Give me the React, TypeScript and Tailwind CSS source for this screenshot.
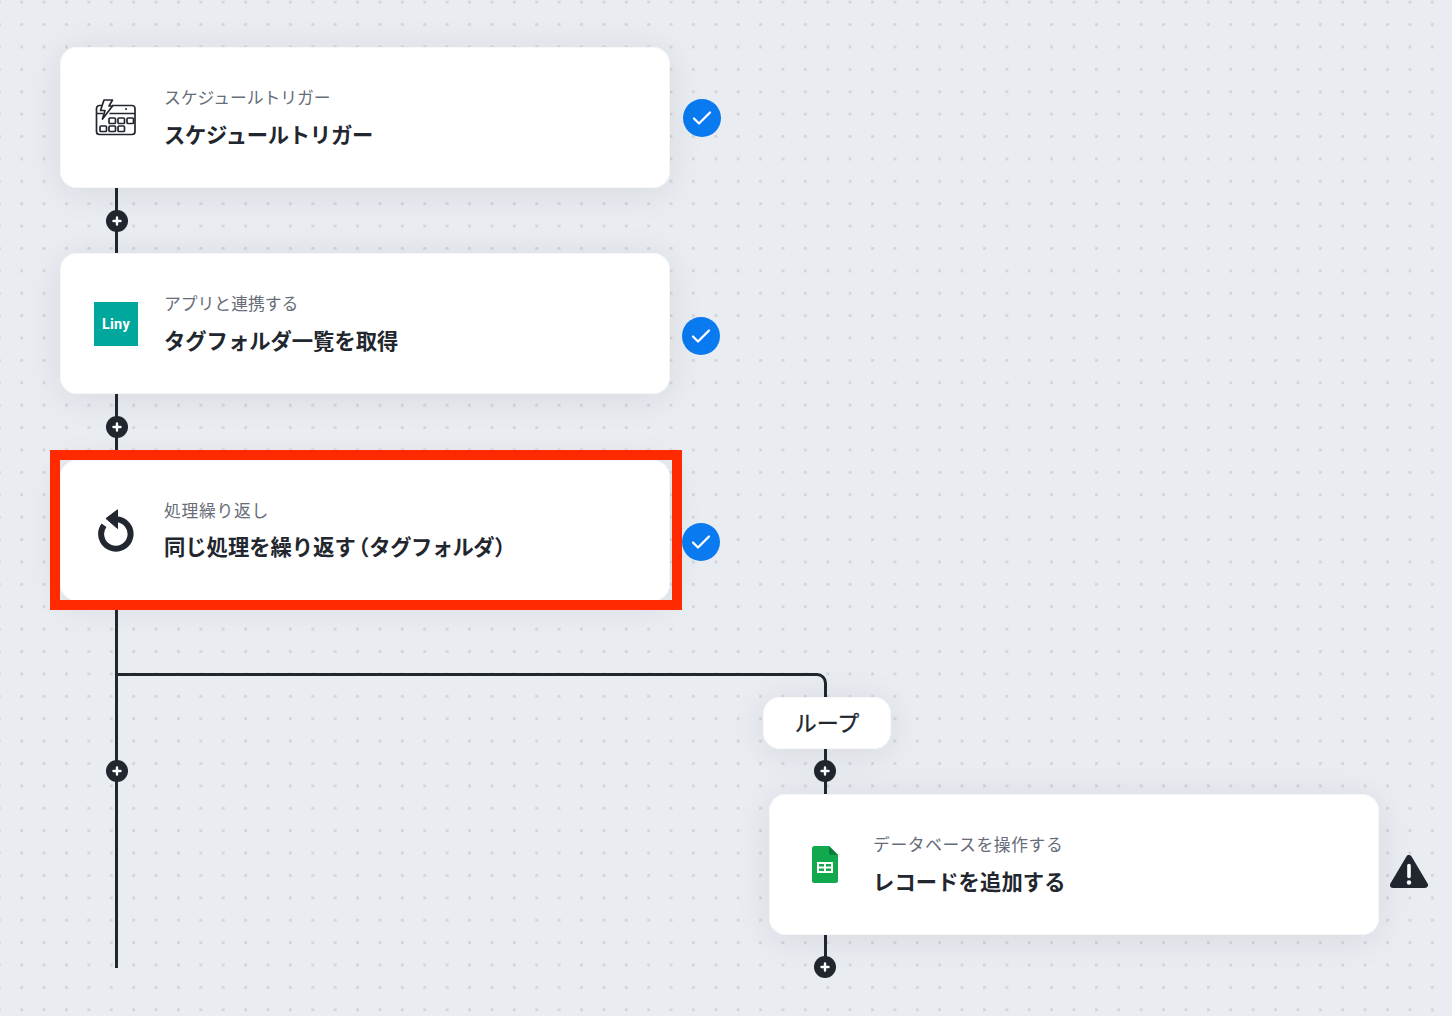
import React from "react";

const ink = "#22262e";

function CalendarIcon() {
  return (
    <svg width="42" height="38" viewBox="0 0 42 38" fill="none" stroke={ink} strokeWidth="1.700" strokeLinejoin="round">
      <path d="M9 6.500H4.500A3 3 0 0 0 1.500 9.500V32.500A3 3 0 0 0 4.500 35.500H37A3 3 0 0 0 40 32.500V9.500A3 3 0 0 0 37 6.500H17" />
      <path d="M2 14.500H8M14.500 14.500H40" />
      <path d="M9 1H17.500L14 7H17.500L7.500 20L10 11.500H5.500L9 1Z" fill="#fff" />
      <circle cx="31" cy="10" r="0.700" fill={ink} strokeWidth="0.800" />
      <rect x="14" y="19" width="6.500" height="5.500" rx="1" />
      <rect x="23" y="19" width="6.500" height="5.500" rx="1" />
      <rect x="32" y="19" width="6.500" height="5.500" rx="1" />
      <rect x="5" y="27" width="6.500" height="5.500" rx="1" />
      <rect x="14" y="27" width="6.500" height="5.500" rx="1" />
      <rect x="23" y="27" width="6.500" height="5.500" rx="1" />
    </svg>
  );
}

function LinyIcon() {
  return (
    <div className="flex h-[44px] w-[44px] items-center justify-center bg-[#00a79d] pt-[4px]">
      <span className="font-['Roboto',sans-serif] text-[14.500px] font-bold leading-none tracking-[0.2px] text-white">Liny</span>
    </div>
  );
}

function RepeatIcon() {
  return (
    <svg width="38" height="44" viewBox="0 0 38 44" fill="none">
      <path d="M7 16.300A14.700 14.700 0 1 0 19 10.300" stroke={ink} strokeWidth="6" />
      <path d="M20.500 0.800V19.500L9 9.500Z" fill={ink} stroke={ink} strokeWidth="1" strokeLinejoin="round" />
    </svg>
  );
}

function SheetsIcon() {
  return (
    <svg width="26" height="37" viewBox="0 0 26 37">
      <path d="M2.500 0H17L26 9V34.500A2.500 2.500 0 0 1 23.500 37H2.500A2.500 2.500 0 0 1 0 34.500V2.500A2.500 2.500 0 0 1 2.500 0Z" fill="#11a84e" />
      <path d="M17 0L26 9H19A2 2 0 0 1 17 7Z" fill="#0b7d3a" />
      <path d="M5 16H21V27H5Z" fill="#fff" />
      <path d="M7 18H12V20.500H7ZM14 18H19V20.500H14ZM7 22.500H12V25H7ZM14 22.500H19V25H14Z" fill="#11a84e" />
    </svg>
  );
}

function Check({ className = "" }: { className?: string }) {
  return (
    <div className={`flex h-[38px] w-[38px] shrink-0 items-center justify-center rounded-full bg-[#0a7af0] ${className}`}>
      <svg width="20" height="16" viewBox="0 0 20 16" fill="none" stroke="#fff" strokeWidth="2.300" strokeLinecap="round" strokeLinejoin="round">
        <path d="M2 8.500L7 13.500L18 2.500" />
      </svg>
    </div>
  );
}

function Plus({ className = "ml-[1px]" }: { className?: string }) {
  return (
    <div className={`flex h-[22px] w-[22px] shrink-0 items-center justify-center rounded-full bg-[#22262e] ${className}`}>
      <svg width="10" height="10" viewBox="0 0 10 10" stroke="#fff" strokeWidth="2.400" strokeLinecap="round">
        <path d="M5 1.500V8.500M1.500 5H8.500" />
      </svg>
    </div>
  );
}

function Card({ icon, sub, title, subClass = "", titleClass = "", children }: { icon: React.ReactNode; sub: string; title: React.ReactNode; subClass?: string; titleClass?: string; children?: React.ReactNode }) {
  return (
    <div className="relative flex h-[141px] w-[610px] shrink-0 items-center gap-[26px] rounded-[17px] bg-white pb-[4px] pl-[34px] shadow-[0_4px_36px_rgba(34,38,46,0.09)] ring-1 ring-inset ring-[#f6f7f9]">
      <div className="flex w-[44px] shrink-0 justify-center pt-[4px]">{icon}</div>
      <div className="flex flex-col">
        <div className={`text-[16.800px] leading-[24px] text-[#666c78] ${subClass}`}>{sub}</div>
        <div className={`mt-[12px] text-[21.300px] font-bold leading-[26px] text-[#22262e] ${titleClass}`}>{title}</div>
      </div>
      {children}
    </div>
  );
}

export default function App() {
  return (
    <div className="h-[1016px] w-[1452px] overflow-hidden bg-[#e9ecf1] bg-[radial-gradient(circle,#d3d6dc_1.400px,transparent_1.800px)] bg-[length:22.400px_22.400px] bg-[position:10.500px_-9px] pl-[60px] pt-[47px] font-['Noto_Sans_CJK_JP','Noto_Sans',sans-serif]">
      <div className="flex items-center gap-[13px]">
        <Card icon={<CalendarIcon />} sub="スケジュールトリガー" title="スケジュールトリガー" titleClass="tracking-[-0.250px]" />
        <Check />
      </div>
      <div className="ml-[55px] flex h-[65px] w-[3px] items-center justify-center bg-[#22262e]"><Plus /></div>
      <div className="flex items-center gap-[12px]">
        <Card icon={<LinyIcon />} sub="アプリと連携する" title="タグフォルダ一覧を取得" />
        <Check className="mt-[24px]" />
      </div>
      <div className="ml-[55px] flex h-[66px] w-[3px] items-center justify-center bg-[#22262e]"><Plus /></div>
      <div className="relative z-10 flex items-center gap-[12px]">
        <Card
          icon={<RepeatIcon />}
          sub="処理繰り返し"
          subClass="tracking-[0.700px]"
          titleClass="-translate-y-[1px]"
          title={<>同じ処理を繰り返す<span className="ml-[3px] [font-feature-settings:'halt']">（</span><span className="tracking-[-0.500px]">タグフォルダ</span><span className="[font-feature-settings:'halt']">）</span></>}
        >
          {/* highlight frame over the card */}
          <div className="pointer-events-none absolute -bottom-[9px] -left-[10px] -right-[12px] -top-[10px] border-[10px] border-[#ff2a00]" />
        </Card>
        <div className="relative mt-[22px]"><Check /></div>
      </div>

      {/* branch */}
      <div className="ml-[55px] flex">
        <div className="flex h-[367px] w-[3px] shrink-0 flex-col items-center bg-[#22262e] pt-[159px]"><Plus /></div>
        <div className="mt-[72px] flex flex-col">
          <div className="h-[24px] w-[709px] rounded-tr-[10px] border-r-[3px] border-t-[3px] border-[#22262e]" />
          <div className="relative z-10 ml-[645px] flex h-[52px] w-[128px] items-center justify-center rounded-[17px] bg-white pb-[3px] text-[22px] font-normal text-[#22262e] shadow-[0_4px_36px_rgba(34,38,46,0.09)] ring-1 ring-inset ring-[#f6f7f9] [-webkit-text-stroke:0.300px_#22262e]">
            ループ
          </div>
          <div className="ml-[706px] flex h-[45px] w-[3px] items-center justify-center bg-[#22262e] pb-[1px]"><Plus className="-ml-[1px]" /></div>
          <div className="ml-[651px] flex items-center gap-[11px]">
            <Card icon={<SheetsIcon />} sub="データベースを操作する" subClass="tracking-[0.600px]" title="レコードを追加する" titleClass="tracking-[0.100px]" />
            <svg className="mt-[16px] shrink-0" width="38" height="35" viewBox="0 0 38 35">
              <path d="M19 3L35 30H3Z" fill="#22262e" stroke="#22262e" strokeWidth="6" strokeLinejoin="round" />
              <path d="M19 10.500V21.500" stroke="#fff" strokeWidth="3.600" strokeLinecap="round" />
              <circle cx="19" cy="27.500" r="2.200" fill="#fff" />
            </svg>
          </div>
          <div className="ml-[706px] flex h-[32px] w-[3px] items-end justify-center bg-[#22262e]"><div className="-mb-[11px]"><Plus className="-ml-[1px]" /></div></div>
        </div>
      </div>
    </div>
  );
}
